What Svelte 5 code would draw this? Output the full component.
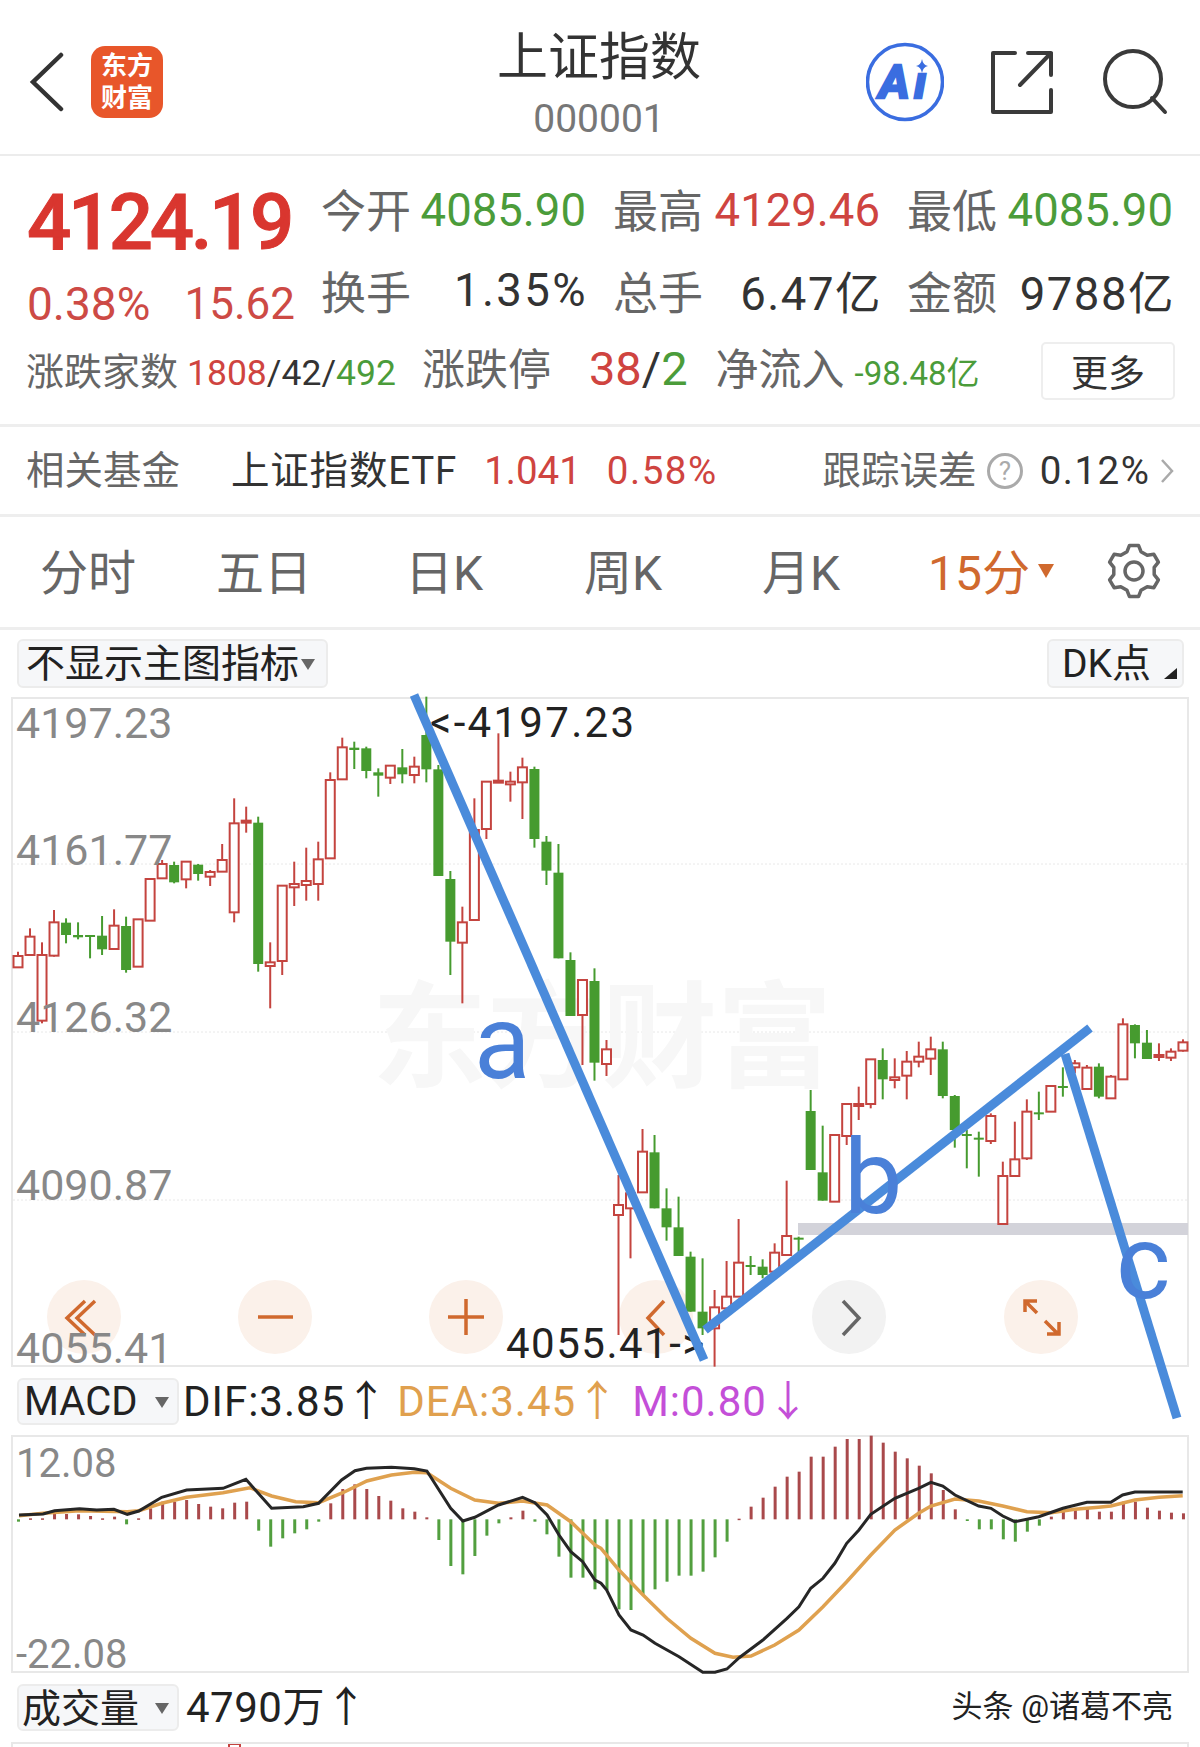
<script>
  // candle rows: [up?, wick top, body top, body bottom, wick bottom], values read off the chart
  const candlesA = [
    [1,785,798,832,832],[1,715,740,795,795],[1,757,795,992,1000],[1,660,697,797,800],[0,685,698,735,760],
    [0,697,735,742,748],[0,735,735,739,805],[0,678,737,778,795],[1,658,707,777,777],[0,680,708,840,848],
    [1,688,688,830,830],[1,567,567,692,692],[1,510,522,565,565],[0,515,525,577,580],[1,515,515,568,595],
    [0,522,524,552,572],[1,540,546,560,588],[1,462,510,545,545],[1,325,400,667,697],[1,350,392,398,428],
    [0,380,398,822,845],[1,757,817,828,955],[1,587,587,813,855],[1,515,582,592,648],[1,473,573,585,632],
    [1,455,508,582,632],[1,247,270,505,505],[1,143,172,268,268],[0,155,173,180,237],[0,170,175,243,265],
    [0,235,247,257,320],[1,225,227,263,282],[0,177,232,253,280],[1,200,230,255,280],[0,20,135,238,277],
    [0,225,238,558,558],[0,543,567,755,855],[1,650,697,758,940],[1,325,420,690,690],[1,275,275,417,447],
    [1,130,272,277,277],[1,245,275,283,335],[1,203,232,277,387],[0,230,237,447,473],[0,438,455,542,585],
    [0,462,548,805,805],[0,787,810,978,978],[1,868,870,975,1125],[0,835,873,1118,1172],[1,1050,1078,1122,1158]
  ];
  const candlesB = [
    [1,585,675,705,1065],[1,640,640,685,835],[1,447,515,637,637],[0,465,517,685,685],[0,625,685,742,782],
    [0,650,742,828,828],[0,815,830,995,995],[0,835,995,1045,1065],[1,930,982,1045,1160],[1,843,950,985,985],
    [1,717,848,950,950],[0,828,855,860,885],[0,838,860,885,895],[1,790,818,875,875],[1,602,768,825,825],
    [0,770,773,775,820],[0,330,393,570,570],[0,437,577,662,662],[1,465,465,665,665],[1,370,372,468,495],
    [1,320,372,378,420],[1,238,238,372,385],[0,205,240,298,358],[1,235,292,300,325],[1,213,245,287,358],
    [1,185,230,245,262],[1,170,208,236,285],[0,185,208,348,355],[0,345,348,450,503],[0,450,462,467,565],
    [0,455,473,478,590],[1,400,408,483,492],[1,545,588,732,732],[1,425,538,588,588],[1,358,395,535,540],
    [0,335,397,403,420],[1,318,318,395,395],[0,262,318,322,350],[1,240,250,262,280],[1,255,263,327,327],
    [0,250,260,350,355],[1,285,290,355,355],[1,115,133,298,298],[0,133,135,190,235],[0,150,188,237,237],
    [1,190,225,230,243],[1,205,215,233,243],[1,178,187,212,215]
  ];
  const candles = [
    ...candlesA.map((c, i) => toCandle(c, i, 690)),
    ...candlesB.map((c, i) => toCandle(c, i + 50, 980))
  ];

  function toCandle(c, i, base) {
    return {
      up: c[0] === 1,
      x: 17 + 12.01 * i,
      hi: base + c[1] / 3,
      top: base + c[2] / 3,
      bot: base + c[3] / 3,
      lo: base + c[4] / 3
    };
  }

  const histRaw = [
    305,295,295,282,282,283,288,295,290,313,295,265,245,245,240,252,260,265,248,245,
    332,380,355,340,328,305,250,207,193,207,228,242,265,275,292,360,438,463,408,347,
    310,292,272,305,343,410,473,473,508,510,568,570,525,508,485,467,467,455,412,365,
    296,260,233,200,170,155,110,110,80,57,57,47,68,95,115,137,160,210,268,303,
    328,328,358,365,335,317,290,275,270,263,275,275,245,245,263,272,278,280
  ];
  const zero = 1420 + 298 / 3;
  const hist = histRaw.map((v, i) => {
    const y = 1420 + v / 3;
    return { x: 16 + 12.01 * i, y: Math.min(y, zero), h: Math.max(Math.abs(y - zero), 1.5), up: y < zero };
  });

  const difL = [[47,285],[110,282],[140,272],[205,266],[250,270],[295,268],[330,283],[360,273],[420,232],[485,210],[580,205],[640,178],[707,265],[790,260],[830,250],[890,180],[925,152],[955,145],[1020,142],[1080,146],[1113,153],[1175,265],[1207,303],[1238,292],[1300,255],[1363,232],[1395,248],[1427,285],[1458,345],[1489,395],[1520,425],[1552,480]];
  const difR = [[0,490],[15,510],[47,585],[78,630],[110,645],[141,670],[204,710],[266,757],[298,757],[329,747],[361,713],[423,660],[486,595],[517,560],[548,505],[580,475],[611,430],[642,370],[674,330],[705,283],[768,235],[830,205],[862,187],[893,198],[925,225],[987,258],[1019,265],[1050,288],[1081,305],[1144,290],[1207,265],[1270,247],[1332,247],[1363,225],[1395,216],[1520,216]];
  const deaL = [[47,287],[110,280],[205,272],[330,275],[360,272],[420,250],[485,232],[580,218],[650,203],[707,228],[770,245],[830,248],[893,218],[956,183],[1020,165],[1080,157],[1113,158],[1175,205],[1238,240],[1300,250],[1363,243],[1427,255],[1489,305],[1552,375]];
  const deaR = [[0,385],[47,450],[110,525],[172,595],[235,655],[298,700],[345,712],[392,708],[454,675],[517,630],[580,560],[642,485],[705,405],[768,330],[830,280],[862,258],[925,237],[987,243],[1050,258],[1113,275],[1176,278],[1238,268],[1300,262],[1332,258],[1395,240],[1458,232],[1520,227]];

  const line = (l, r) =>
    [...l.map(([x, y]) => [x / 2.613, y]), ...r.map(([x, y]) => [600 + x / 2.613, y])]
      .map(([x, y]) => `${x.toFixed(1)},${(1420 + y / 3).toFixed(1)}`)
      .join(" ");

  const grid = [864, 1032, 1200];
  const priceLabels = [
    ["4197.23", 738],
    ["4161.77", 865],
    ["4126.32", 1032],
    ["4090.87", 1200],
    ["4055.41", 1363]
  ];

  const tabs = ["分时", "五日", "日K", "周K", "月K"];

  const circles = [
    [83, "#fbf1ea"],
    [274, "#fbf1ea"],
    [465, "#fbf1ea"],
    [655, "#fbf1ea"],
    [848, "#f2f2f2"],
    [1040, "#fbf1ea"]
  ];

  const gearPath = (() => {
    const cx = 27, cy = 28, pts = [];
    for (let i = 0; i < 6; i++) {
      const a = (i * 60 - 90) * Math.PI / 180;
      for (const [r, d] of [[20.5, -20], [26, -10], [26, 10], [20.5, 20]]) {
        const t = a + d * Math.PI / 180;
        pts.push(`${(cx + r * Math.cos(t)).toFixed(1)} ${(cy + r * Math.sin(t)).toFixed(1)}`);
      }
    }
    return "M" + pts.join("L") + "Z";
  })();
</script>

<div class="page">
  <header>
    <div class="left">
      <svg class="back" width="36" height="60" viewBox="0 0 36 60">
        <path d="M32 3 L4 30 L32 57" />
      </svg>
      <div class="logo"><span>东方</span><span>财富</span></div>
    </div>
    <div class="title">
      <h1>上证指数</h1>
      <p>000001</p>
    </div>
    <div class="right">
      <svg class="ai" width="78" height="80" viewBox="0 0 78 80">
        <circle cx="39" cy="40" r="37.5" />
        <text x="13" y="56">A</text>
        <text x="48" y="56">ı</text>
        <path d="M56 17 Q57 23 62 24 Q57 25 56 31 Q55 25 50 24 Q55 23 56 17Z" />
      </svg>
      <svg class="line-icon" width="62" height="64" viewBox="0 0 62 64">
        <path d="M24 3 H2 V62 H60 V40" />
        <path d="M29 35 L60 3 M37 3 H60 V25" />
      </svg>
      <svg class="line-icon search" width="66" height="66" viewBox="0 0 66 66">
        <circle cx="30" cy="30" r="28" />
        <path d="M49 49 L62 63" />
      </svg>
    </div>
  </header>

  <section class="quote">
    <div class="quote-top">
      <div class="last">
        <div class="price">4124.19</div>
        <div class="change"><span>0.38%</span><span class="delta">15.62</span></div>
      </div>
      <div class="stats">
        <div><b>今开</b><span class="green">4085.90</span></div>
        <div><b>最高</b><span class="red">4129.46</span></div>
        <div><b>最低</b><span class="green">4085.90</span></div>
        <div><b class="lower">换手</b><span class="spaced pct">1.35%</span></div>
        <div><b class="lower">总手</b><span class="spaced">6.47亿</span></div>
        <div><b class="lower">金额</b><span class="spaced">9788亿</span></div>
      </div>
    </div>
    <div class="breadth">
      <span class="b1">涨跌家数</span>
      <span class="b2"><i class="red">1808</i>/42/<i class="green">492</i></span>
      <span class="b3">涨跌停</span>
      <span class="b4"><i class="red">38</i>/<i class="green">2</i></span>
      <span class="b3 b5">净流入</span>
      <span class="b6 green">-98.48亿</span>
      <button class="more">更多</button>
    </div>
  </section>

  <section class="fund">
    <span class="muted">相关基金</span>
    <span class="fund-name">上证指数ETF</span>
    <span class="red fund-price">1.041</span>
    <span class="red fund-pct">0.58%</span>
    <span class="muted track">跟踪误差</span>
    <svg width="38" height="38" viewBox="0 0 38 38" class="help">
      <circle cx="19" cy="19" r="16.5" />
      <text x="19" y="28" text-anchor="middle">?</text>
    </svg>
    <span class="track-val">0.12%</span>
    <svg width="14" height="26" viewBox="0 0 14 26" class="chev"><path d="M2 2 L12 13 L2 24" /></svg>
  </section>

  <nav class="tabs">
    {#each tabs as t}
      <span>{t}</span>
    {/each}
    <span class="active">15分<em></em></span>
    <svg width="54" height="56" viewBox="0 0 54 56" class="gear">
      <path d={gearPath} />
      <circle cx="27" cy="28" r="9" />
    </svg>
  </nav>

  <div class="bar bar-main">
    <button class="select wide">不显示主图指标<em></em></button>
    <button class="select dk">DK点<u></u></button>
  </div>

  <div class="frame kline">
    <svg width="1174" height="666" viewBox="12 699 1174 666">
      {#each grid as y}
        <line class="grid" x1="12" x2="1186" y1={y} y2={y} />
      {/each}
      <text class="mark" x="371" y="1078">东方财富</text>
      {#each circles as [cx, fill]}
        <circle {cx} cy="1317" r="37" {fill} />
      {/each}
      <rect x="797" y="1223" width="390" height="12" fill="#d3d3da" />
      {#each candles as c}
        <line x1={c.x} x2={c.x} y1={c.hi} y2={c.lo} stroke={c.up ? "#c4443f" : "#469b2f"} stroke-width="2" />
        {#if c.up}
          <rect x={c.x - 4.5} y={c.top} width="9" height={Math.max(c.bot - c.top, 2)} fill="#fff" stroke="#c4443f" stroke-width="2" />
        {:else}
          <rect x={c.x - 5} y={c.top} width="10" height={Math.max(c.bot - c.top, 2)} fill="#469b2f" />
        {/if}
      {/each}
      <g class="nav-icon">
        <path d="M84 1301 L66 1318 L84 1335 M94 1301 L76 1318 L94 1335" />
        <path d="M257 1317 H292" />
        <path d="M447 1317 H483 M465 1299 V1335" />
        <path d="M663 1301 L647 1318 L663 1335" />
        <path class="gray" d="M842 1301 L858 1318 L842 1335" />
        <path d="M1024 1301 L1036 1313 M1024 1312 V1301 H1036 M1057 1334 L1044 1321 M1058 1322 V1334 H1046" />
      </g>
      {#each priceLabels as [t, y]}
        <text class="axis" x="15" {y}>{t}</text>
      {/each}
      <text class="peak top-peak" x="429" y="737">&lt;-4197.23</text>
      <text class="peak low-peak" x="505" y="1358">4055.41-&gt;</text>
    </svg>
  </div>

  <div class="bar bar-sub">
    <button class="select short">MACD<em></em></button>
    <span class="vals">DIF:3.85↑</span>
    <span class="vals dea">DEA:3.45↑</span>
    <span class="vals m">M:0.80↓</span>
  </div>

  <div class="frame macd">
    <svg width="1174" height="234" viewBox="12 1437 1174 234">
      {#each hist as h}
        <rect x={h.x} y={h.y} width="3" height={h.h} fill={h.up ? "#a9494b" : "#529f3f"} />
      {/each}
      <polyline points={line(deaL, deaR)} fill="none" stroke="#dfa14f" stroke-width="3.5" />
      <polyline points={line(difL, difR)} fill="none" stroke="#262626" stroke-width="3" />
      <text class="axis small" x="15" y="1477">12.08</text>
      <text class="axis small" x="15" y="1668">-22.08</text>
    </svg>
  </div>

  <div class="bar bar-sub vol-bar">
    <button class="select short cn">成交量<em></em></button>
    <span class="vals vol-val">4790万↑</span>
    <span class="credit">头条 @诸葛不亮</span>
  </div>

  <div class="frame vol">
    <svg width="1174" height="5" viewBox="12 1744 1174 5">
      <rect x="228" y="1744" width="11" height="8" fill="#fff" stroke="#c4443f" stroke-width="2" />
    </svg>
  </div>

  <svg class="notes" width="1200" height="1747" viewBox="0 0 1200 1747">
    <g stroke="#4a8bdb" stroke-width="9">
      <line x1="414" y1="695" x2="704" y2="1360" />
      <line x1="705" y1="1330" x2="1090" y2="1028" />
      <line x1="1065" y1="1054" x2="1177" y2="1418" />
    </g>
    <text x="474" y="1078">a</text>
    <text x="844" y="1213">b</text>
    <text x="1116" y="1298">c</text>
  </svg>
</div>

<style>
  :global(body) {
    background: #fff;
  }

  .page {
    position: relative;
    width: 1200px;
    height: 1747px;
    overflow: hidden;
    background: #fff;
    color: #333;
    font-family: Roboto, "Noto Sans CJK SC", sans-serif;
  }

  .page svg {
    display: block;
  }

  .page svg text {
    font-family: Roboto, "Noto Sans CJK SC", sans-serif;
  }

  button {
    font-family: inherit;
    color: inherit;
    padding: 0;
  }

  .red {
    color: #cf4440;
  }

  .green {
    color: #4b9c3a;
  }

  i {
    font-style: normal;
  }

  header {
    display: grid;
    grid-template-columns: 1fr auto 1fr;
    align-items: center;
    height: 156px;
    padding: 10px 31px 0 29px;
    border-bottom: 2px solid #ececec;
    box-sizing: border-box;
  }

  .left {
    display: flex;
    align-items: center;
    gap: 26px;
  }

  .back path {
    fill: none;
    stroke: #333;
    stroke-width: 4.5;
    stroke-linecap: round;
  }

  .logo {
    display: flex;
    flex-direction: column;
    align-items: center;
    justify-content: center;
    width: 72px;
    height: 72px;
    border-radius: 14px;
    background: #e8562a;
    color: #fff;
    font-size: 26px;
    font-weight: 700;
    line-height: 32px;
  }

  .title {
    margin-top: 4px;
    text-align: center;
  }

  h1 {
    margin: 0;
    font-size: 51px;
    font-weight: 400;
    line-height: 60px;
    color: #333;
  }

  .title p {
    margin: 10px 0 0;
    font-size: 39px;
    line-height: 42px;
    color: #777;
  }

  .right {
    display: flex;
    justify-content: flex-end;
    align-items: center;
    gap: 47px;
  }

  .ai circle {
    fill: none;
    stroke: #3a6de0;
    stroke-width: 3.5;
  }

  .ai text {
    font-size: 47px;
    font-weight: 700;
    font-style: italic;
    fill: #3a6de0;
    stroke: #3a6de0;
    stroke-width: 2.5;
  }

  .ai path {
    fill: #3a6de0;
  }

  .line-icon path,
  .line-icon circle {
    fill: none;
    stroke: #3a3a3a;
    stroke-width: 4;
    stroke-linecap: round;
    stroke-linejoin: round;
  }

  .search {
    margin-left: 3px;
  }

  .quote {
    height: 268px;
    padding-top: 14px;
    box-sizing: border-box;
  }

  .quote-top {
    display: flex;
    padding-left: 27px;
  }

  .last {
    width: 294px;
    flex: none;
  }

  .price {
    height: 100px;
    font-size: 78px;
    line-height: 106px;
    font-weight: 500;
    letter-spacing: -3.4px;
    color: #d9362f;
    -webkit-text-stroke: 1px #d9362f;
  }

  .change {
    display: flex;
    justify-content: space-between;
    width: 268px;
    height: 60px;
    padding-top: 4px;
    font-size: 46px;
    line-height: 60px;
    color: #cd4a45;
  }

  .delta {
    font-size: 44px;
  }

  .stats {
    display: grid;
    grid-template-columns: 265px 267px 266px;
    grid-auto-rows: 80px;
    column-gap: 27px;
  }

  .stats div {
    display: flex;
    justify-content: space-between;
    align-items: center;
    font-size: 45.5px;
  }

  .stats b {
    padding-bottom: 3px;
    font-size: 45px;
    font-weight: 400;
    color: #666;
  }

  .stats b.lower {
    padding-bottom: 0;
  }

  .spaced {
    margin-right: -2px;
    letter-spacing: 1.5px;
  }

  .pct {
    letter-spacing: 2.4px;
  }

  .breadth {
    display: flex;
    align-items: baseline;
    height: 80px;
    padding: 13px 25px 0 26px;
    box-sizing: border-box;
    line-height: 44px;
  }

  .b1 {
    font-size: 38px;
    color: #666;
  }

  .b2 {
    margin-left: 9px;
    font-size: 35.5px;
  }

  .b3 {
    margin-left: 26px;
    font-size: 43px;
    color: #666;
  }

  .b4 {
    margin-left: 38px;
    font-size: 47px;
  }

  .b3.b5 {
    margin-left: 28px;
  }

  .b6 {
    margin-left: 10px;
    font-size: 33px;
  }

  .more {
    align-self: center;
    margin: -19px 0 0 auto;
    width: 134px;
    height: 58px;
    background: #fff;
    border: 2px solid #eee;
    border-radius: 5px;
    font-size: 37px;
  }

  .fund {
    display: flex;
    align-items: baseline;
    height: 93px;
    padding: 24px 0 0 26px;
    box-sizing: border-box;
    border-top: 3px solid #eee;
    border-bottom: 3px solid #eee;
    font-size: 38.5px;
    line-height: 40px;
  }

  .muted {
    color: #666;
  }

  .fund-name {
    margin-left: 51px;
    letter-spacing: 0.8px;
  }

  .fund-price {
    margin-left: 27px;
  }

  .fund-pct {
    margin-left: 26px;
    letter-spacing: 1.5px;
  }

  .track {
    margin-left: 105px;
  }

  .help {
    align-self: center;
    margin: -24px 0 0 9px;
  }

  .help circle {
    fill: none;
    stroke: #aaa;
    stroke-width: 3;
  }

  .help text {
    font-size: 26px;
    fill: #aaa;
  }

  .track-val {
    margin-left: 16px;
    letter-spacing: 1.5px;
  }

  .chev {
    align-self: center;
    margin: -24px 0 0 10px;
  }

  .chev path {
    fill: none;
    stroke: #aaa;
    stroke-width: 2.5;
  }

  .tabs {
    display: grid;
    grid-template-columns: 176px 176px 184px 174px 182px 188px 108px;
    align-items: center;
    justify-items: center;
    height: 113px;
    padding-bottom: 6px;
    box-sizing: border-box;
    border-bottom: 3px solid #eee;
    font-size: 48px;
    color: #666;
  }

  .tabs .active {
    position: relative;
    justify-self: start;
    margin-left: 36px;
    color: #d0692e;
  }

  .tabs em {
    position: absolute;
    left: calc(100% + 8px);
    top: 30px;
    border: 8px solid transparent;
    border-top: 14px solid #d0692e;
    border-bottom: 0;
  }

  .gear {
    margin-top: 4px;
  }

  .gear path,
  .gear circle {
    fill: none;
    stroke: #666;
    stroke-width: 3.5;
    stroke-linejoin: round;
  }

  .bar {
    display: flex;
    align-items: center;
  }

  .bar-main {
    justify-content: space-between;
    height: 67px;
    padding: 0 16px 0 17px;
    box-sizing: border-box;
  }

  .select {
    position: relative;
    display: flex;
    align-items: center;
    height: 47px;
    background: #f6f7f9;
    border: 2px solid #ececec;
    border-radius: 6px;
    color: #222;
    box-sizing: border-box;
  }

  .select em {
    border: 7px solid transparent;
    border-top: 11px solid #666;
    border-bottom: 0;
  }

  .wide {
    width: 311px;
    height: 49px;
    padding: 0 0 8px 7px;
    font-size: 39px;
  }

  .wide em {
    margin: 10px 0 0 2px;
  }

  .dk {
    width: 137px;
    height: 49px;
    padding: 0 0 8px 13px;
    font-size: 39px;
  }

  .dk u {
    position: absolute;
    right: 5px;
    bottom: 7px;
    border-left: 13px solid transparent;
    border-bottom: 11px solid #222;
  }

  .frame {
    margin: 0 13px 0 11px;
    border: 2px solid #e8e8e8;
    width: 1174px;
  }

  .frame svg {
    overflow: visible;
  }

  .grid {
    stroke: #e8e8e8;
    stroke-dasharray: 2 2;
  }

  .mark {
    font-size: 115px;
    font-weight: 700;
    fill: #f7f7f7;
  }

  .axis {
    font-size: 43px;
    fill: #888;
  }

  .axis.small {
    font-size: 40px;
  }

  .peak {
    font-size: 42px;
    fill: #222;
  }

  .top-peak {
    letter-spacing: 2.3px;
  }

  .low-peak {
    letter-spacing: 1.5px;
  }

  .nav-icon path {
    fill: none;
    stroke: #d0692e;
    stroke-width: 3.5;
  }

  .nav-icon .gray {
    stroke: #666;
  }

  .bar-sub {
    height: 68px;
    padding-left: 17px;
  }

  .short {
    width: 162px;
    padding-left: 5px;
    font-size: 40px;
  }

  .short.cn {
    padding: 0 0 5px 3px;
    font-size: 39px;
  }

  .short em {
    position: absolute;
    left: 136px;
    top: 17px;
  }

  .vals {
    margin-left: 4px;
    padding-bottom: 8px;
    font-size: 42px;
    letter-spacing: 1px;
    color: #222;
  }

  .dea {
    margin-left: 9px;
    color: #e0a04e;
  }

  .m {
    margin-left: 13px;
    color: #c44fd8;
  }

  .vol-bar {
    height: 69px;
  }

  .vol-val {
    margin-left: 7px;
    letter-spacing: 0.5px;
  }

  .credit {
    margin: 0 0 0 auto;
    padding: 0 27px 8px 0;
    font-size: 31px;
    letter-spacing: 0;
    color: #222;
  }

  .vol {
    border-bottom: 0;
    height: 5px;
    overflow: hidden;
  }

  .notes {
    position: absolute;
    top: 0;
    left: 0;
    pointer-events: none;
  }

  .notes text {
    font-size: 104px;
    fill: #4a80d8;
  }
</style>
